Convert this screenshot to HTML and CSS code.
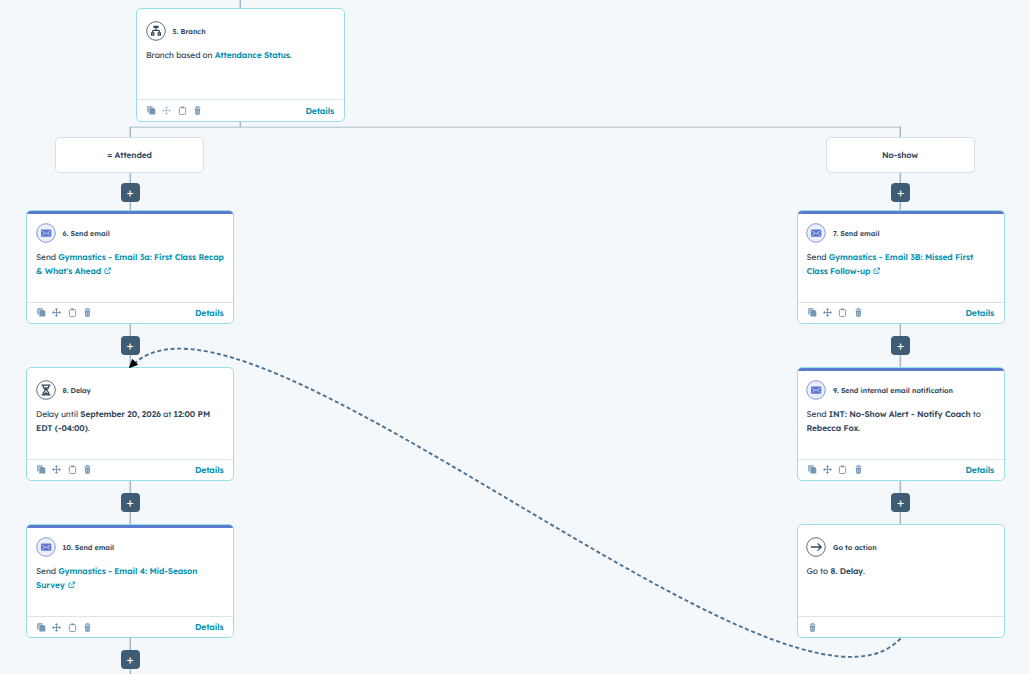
FILE: index.html
```html
<!DOCTYPE html>
<html lang="en">
<head>
<meta charset="utf-8">
<title>Workflow</title>
<link rel="stylesheet" href="styles.css">
</head>
<body>
<svg class="defs" aria-hidden="true">
  <symbol id="copy" viewBox="0 0 9 9"><path d="M.9 6.400V1.300Q.9.8 1.400.8h4.200" fill="none" stroke="currentColor" stroke-width="1.300"/><path d="M2.900 2h3.900L8.300 3.500V8q0 .6-.6.6H2.900q-.6 0-.6-.6V2.600Q2.300 2 2.900 2z" fill="currentColor"/></symbol>
  <symbol id="move" viewBox="0 0 9 9"><path d="M4.500 1v7M1 4.500h7" stroke="currentColor" stroke-width="1.100"/><path d="M4.500 0 6.200 2H2.800zM4.500 9 6.200 7H2.800zM0 4.500 2 2.800v3.400zM9 4.500 7 2.800v3.400z" fill="currentColor"/></symbol>
  <symbol id="paste" viewBox="0 0 9 9"><rect x="1.400" y="1.500" width="6.200" height="7" rx="1.100" fill="none" stroke="currentColor" stroke-width=".9"/><path d="M3 .5h3v1.700H3z" fill="currentColor"/></symbol>
  <symbol id="trash" viewBox="0 0 9 9"><path d="M1.500 1.900h6M3.300 1.600V.6h2.400v1" fill="none" stroke="currentColor" stroke-width=".9"/><path d="M1.900 2.800h5.200L6.700 8q0 .8-.7.8H3q-.7 0-.7-.8z" fill="currentColor"/><path d="M3.700 4v3.500M5.300 4v3.500" stroke="#fff" stroke-width=".4"/></symbol>
  <symbol id="mail" viewBox="0 0 20 20"><circle cx="10" cy="10" r="9.300" fill="#eceffa" stroke="#6a7fd4" stroke-width=".8"/><rect x="5" y="6.500" width="10.300" height="7.200" rx=".9" fill="#5a77d2"/><path d="m6.200 8.200 3.900 2.700L14 8.200M6.200 12.300l1.900-1.600M14 12.300l-1.900-1.600" fill="none" stroke="#e5eafa" stroke-width=".8"/></symbol>
  <symbol id="branch" viewBox="0 0 20 20"><circle cx="10" cy="10" r="9.300" fill="#fff" stroke="#33475b" stroke-width=".8"/><path d="M10 6.500v3M6.700 12v-1.900q0-.8.8-.8h5q.8 0 .8.8V12" fill="none" stroke="#33475b" stroke-width="1.200"/><path d="M8 5.300h4v1.200H8zM5.600 11.800h2.200v2.400H5.600zM12.200 11.800h2.200v2.400h-2.200z" fill="none" stroke="#33475b" stroke-width="1.200"/></symbol>
  <symbol id="hourglass" viewBox="0 0 20 20"><circle cx="10" cy="10" r="9.300" fill="#fff" stroke="#33475b" stroke-width=".8"/><path d="M5.600 5.200h8.800M5.600 14.800h8.800M7 5.400q0 3 3 4.600 3-1.600 3-4.600M7 14.600q0-3 3-4.600 3 1.600 3 4.600" fill="none" stroke="#33475b" stroke-width="1.200"/><path d="M7.600 7.200h4.800L10 9.200zM7.500 14.200q.5-1.300 2.500-1.900 2 .6 2.500 1.900z" fill="#33475b"/></symbol>
  <symbol id="goto" viewBox="0 0 20 20"><circle cx="10" cy="10" r="9.300" fill="#fff" stroke="#33475b" stroke-width=".8"/><path d="M5 10h10M11.500 6.400l3.700 3.600-3.700 3.600" fill="none" stroke="#33475b" stroke-width="1.300"/></symbol>
  <symbol id="external" viewBox="0 0 8 8"><path d="M3.200 2H1.600Q1 2 1 2.600v3.800Q1 7 1.600 7h3.800Q6 7 6 6.400V4.800M3.200 4.800 7 1M4.600 1H7v2.400" fill="none" stroke="currentColor" stroke-width=".9"/></symbol>
</svg>

<main class="canvas">
  <svg class="wires" viewBox="0 0 1030 674">
    <path class="rail" d="M130 127.300H900.500"/>
    <path class="wire" d="M240.300 0V8M240.300 122v5M130.300 126.500V674M900.300 126.500V525"/>
  </svg>

  <article class="card branch">
    <div class="body">
      <header><svg class="badge"><use href="#branch"/></svg><h2>5. Branch</h2></header>
      <p>Branch based on <a>Attendance Status</a>.</p>
    </div>
    <footer><svg><use href="#copy"/></svg><svg class="off"><use href="#move"/></svg><svg><use href="#paste"/></svg><svg><use href="#trash"/></svg><a>Details</a></footer>
  </article>

  <section class="lane left">
    <div class="path">= Attended</div>
    <button class="add">+</button>
    <article class="card email">
      <div class="body">
        <header><svg class="badge"><use href="#mail"/></svg><h2>6. Send email</h2></header>
        <p>Send <a>Gymnastics - Email 3a: First Class Recap<br>&amp; What's Ahead <svg class="ext"><use href="#external"/></svg></a></p>
      </div>
      <footer><svg><use href="#copy"/></svg><svg><use href="#move"/></svg><svg><use href="#paste"/></svg><svg><use href="#trash"/></svg><a>Details</a></footer>
    </article>
    <button class="add">+</button>
    <article class="card">
      <div class="body">
        <header><svg class="badge"><use href="#hourglass"/></svg><h2>8. Delay</h2></header>
        <p>Delay until <b>September 20, 2026</b> at <b>12:00 PM<br>EDT (-04:00)</b>.</p>
      </div>
      <footer><svg><use href="#copy"/></svg><svg><use href="#move"/></svg><svg><use href="#paste"/></svg><svg><use href="#trash"/></svg><a>Details</a></footer>
    </article>
    <button class="add">+</button>
    <article class="card email">
      <div class="body">
        <header><svg class="badge"><use href="#mail"/></svg><h2>10. Send email</h2></header>
        <p>Send <a>Gymnastics - Email 4: Mid-Season<br>Survey <svg class="ext"><use href="#external"/></svg></a></p>
      </div>
      <footer><svg><use href="#copy"/></svg><svg><use href="#move"/></svg><svg><use href="#paste"/></svg><svg><use href="#trash"/></svg><a>Details</a></footer>
    </article>
    <button class="add">+</button>
  </section>

  <section class="lane right">
    <div class="path">No-show</div>
    <button class="add">+</button>
    <article class="card email">
      <div class="body">
        <header><svg class="badge"><use href="#mail"/></svg><h2>7. Send email</h2></header>
        <p>Send <a>Gymnastics - Email 3B: Missed First<br>Class Follow-up <svg class="ext"><use href="#external"/></svg></a></p>
      </div>
      <footer><svg><use href="#copy"/></svg><svg><use href="#move"/></svg><svg><use href="#paste"/></svg><svg><use href="#trash"/></svg><a>Details</a></footer>
    </article>
    <button class="add">+</button>
    <article class="card email">
      <div class="body">
        <header><svg class="badge"><use href="#mail"/></svg><h2>9. Send internal email notification</h2></header>
        <p>Send <b>INT: No-Show Alert - Notify Coach</b> to<br><b>Rebecca Fox</b>.</p>
      </div>
      <footer><svg><use href="#copy"/></svg><svg><use href="#move"/></svg><svg><use href="#paste"/></svg><svg><use href="#trash"/></svg><a>Details</a></footer>
    </article>
    <button class="add">+</button>
    <article class="card">
      <div class="body">
        <header><svg class="badge"><use href="#goto"/></svg><h2>Go to action</h2></header>
        <p>Go to <b>8. Delay</b>.</p>
      </div>
      <footer><svg><use href="#trash"/></svg></footer>
    </article>
  </section>

  <svg class="wires" viewBox="0 0 1030 674">
    <path class="jump" d="M900.500 638.500C788.500 758.500 239 247 131 367"/>
    <path d="M132.500 359.500 129.500 367.500 137.500 364.500z" stroke="#000" stroke-width="1"/>
  </svg>
</main>
</body>
</html>
```
FILE: styles.css
```css
* { box-sizing: border-box; }
body { margin: 0; background: #f4f8fb; color: #33475b; font: 8.3px/14px "Lexend Deca", Inter, "Open Sans", sans-serif; letter-spacing: -.08px; text-rendering: geometricPrecision; }
.defs { position: absolute; width: 0; height: 0; }
.canvas { position: relative; width: 1030px; height: 674px; overflow: hidden; background: #f4f8fb; }
.wires { position: absolute; left: 0; top: 0; width: 1030px; height: 674px; pointer-events: none; }
.wire { stroke: #a3b7c9; stroke-width: 1.5; fill: none; }
.rail { stroke: #c3d1dc; stroke-width: 1.5; }
.jump { fill: none; stroke: #4a7194; stroke-width: 1.9; stroke-dasharray: 4 2.7; }

.card { position: relative; display: flex; flex-direction: column; width: 208px; height: 114px; flex: none; overflow: hidden; background: #fff; border: 1px solid #98e0e6; border-radius: 5px; }
.card.branch { position: absolute; left: 136px; top: 8px; width: 208.5px; }
.email::before { content: ""; position: absolute; left: 0; right: 0; top: 0; height: 3px; background: #5a7bd0; }
.body { flex: 1; padding: 12px 9px 0; }
.card header { display: flex; align-items: center; gap: 7px; height: 20px; }
.badge { width: 20px; height: 20px; flex: none; margin-left: -.5px; }
h2 { margin: 0; padding-top: 1px; font-size: 7.05px; font-weight: 600; letter-spacing: 0; white-space: nowrap; }
p { margin: 7.6px 0 0; white-space: nowrap; }
a { color: #0091ae; font-weight: 600; }
b { font-weight: 600; }
.ext { width: 7.5px; height: 7.5px; margin-left: .5px; vertical-align: -1px; }
.card footer { display: flex; align-items: center; gap: 6.4px; height: 21.5px; padding: 0 9.5px 0 10px; border-top: 1px solid #dbe4ec; }
.branch footer { height: 22px; }
.card footer svg { width: 9px; height: 9px; color: #7397b5; }
.card footer svg.off { opacity: .5; }
.card footer a { margin-left: auto; padding-top: 2px; font-size: 8.5px; letter-spacing: -.15px; }

.lane { position: absolute; top: 137px; width: 208px; display: flex; flex-direction: column; align-items: center; }
.left { left: 26px; }
.right { left: 796.5px; }
.path { width: 149px; height: 36px; margin-right: 1px; padding-top: 1.5px; flex: none; display: flex; align-items: center; justify-content: center; border: 1px solid #d3dfe9; border-radius: 5px; background: #fff; font-weight: 600; }
.add { display: flex; align-items: center; justify-content: center; width: 19px; height: 19px; flex: none; padding: 0 0 1px; border: 0; border-radius: 4px; background: #3e5c74; color: #fff; font: 13px/18px Inter, sans-serif; margin: 12.05px 0; }
.path + .add { margin: 10px 0 8.1px; }
```
